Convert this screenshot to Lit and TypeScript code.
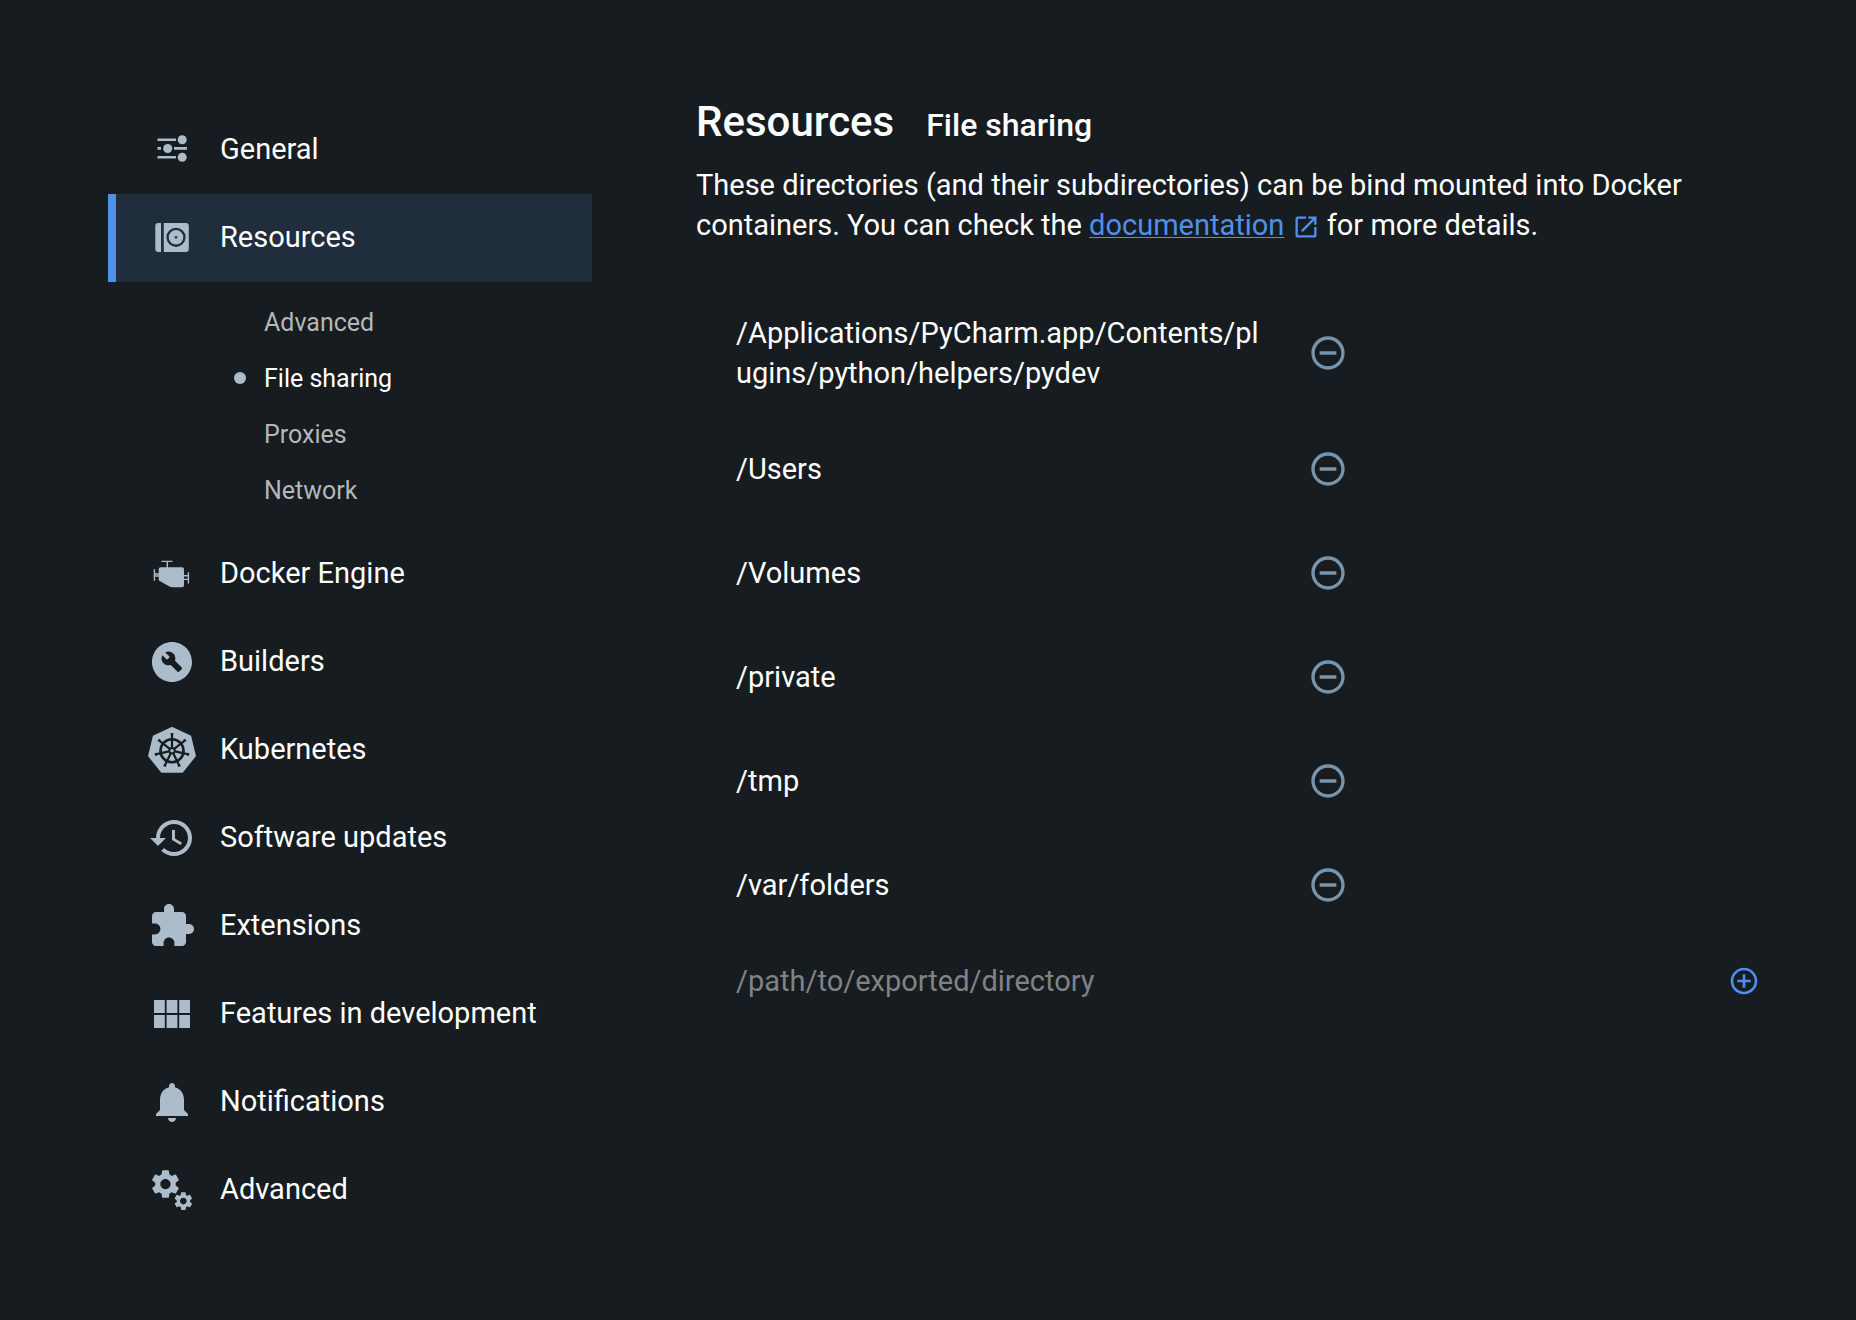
import { LitElement, html, css, svg, nothing } from "lit";
import type { TemplateResult, SVGTemplateResult } from "lit";
import { customElement, property, state } from "lit/decorators.js";
import { classMap } from "lit/directives/class-map.js";

const GEAR =
  "M19.14 12.94c.04-.3.06-.61.06-.94 0-.32-.02-.64-.07-.94l2.03-1.58c.18-.14.23-.41.12-.61l-1.92-3.32c-.12-.22-.37-.29-.59-.22l-2.39.96c-.5-.38-1.03-.7-1.62-.94l-.36-2.54c-.04-.24-.24-.41-.48-.41h-3.84c-.24 0-.43.17-.47.41l-.36 2.54c-.59.24-1.13.57-1.62.94l-2.39-.96c-.22-.08-.47 0-.59.22L2.74 8.87c-.12.21-.08.47.12.61l2.03 1.58c-.05.3-.09.63-.09.94s.02.64.07.94l-2.03 1.58c-.18.14-.23.41-.12.61l1.92 3.32c.12.22.37.29.59.22l2.39-.96c.5.38 1.03.7 1.62.94l.36 2.54c.05.24.24.41.48.41h3.84c.24 0 .44-.17.47-.41l.36-2.54c.59-.24 1.13-.56 1.62-.94l2.39.96c.22.08.47 0 .59-.22l1.92-3.32c.12-.22.07-.47-.12-.61l-2.01-1.58zM12 15.6c-1.98 0-3.6-1.62-3.6-3.6s1.62-3.6 3.6-3.6 3.6 1.62 3.6 3.6-1.62 3.6-3.6 3.6z";

const SPOKES = [0, 1, 2, 3, 4, 5, 6].map((n) => (n * 360) / 7);

// Every icon is drawn on a 48-unit grid; 24-unit glyphs are scaled up by two.
const icons: Record<string, SVGTemplateResult> = {
  general: svg`
    <path d="M9.5 12.5H28v2.6H9.5zM9.5 21.1H13v2.7H9.5zM26 21.1h13v2.7H26zM9.5 29.9H28v2.6H9.5z" />
    <circle cx="34.2" cy="13.8" r="4.5" /><circle cx="19.7" cy="22.5" r="4.5" /><circle cx="34.2" cy="31.2" r="4.5" />`,
  resources: svg`
    <path fill-rule="evenodd" d="M10.3 9H13v29h-2.7a3 3 0 0 1-3-3V12a3 3 0 0 1 3-3z
      M15.8 9h22a3 3 0 0 1 3 3v23a3 3 0 0 1-3 3h-22z
      M28 13.7a9.6 9.6 0 1 0 0 19.2a9.6 9.6 0 1 0 0-19.2z
      M28 16a7.3 7.3 0 1 1 0 14.6a7.3 7.3 0 1 1 0-14.6z
      M28 21.9a1.4 1.4 0 1 0 0 2.8a1.4 1.4 0 1 0 0-2.8z" />`,
  engine: svg`
    <path d="M12.7 17.3H34a2 2 0 0 1 2 2v16a2 2 0 0 1-2 2H25q-2 0-4-1l-9.3-5.2q-1-.6-1-1.6V19.3a2 2 0 0 1 2-2z" />
    <path fill="none" stroke="currentColor" stroke-width="1.4" d="M13.5 11.4H24.5M19.3 11.4V18M6.4 19.3V30.7M6.4 24H11M6.4 26H11M40.4 22.3V33.5M36 25.8H40.4M36 29.4H40.4" />`,
  builders: svg`
    <path transform="scale(2)" fill-rule="evenodd" d="M12 2C6.48 2 2 6.48 2 12s4.48 10 10 10 10-4.48 10-10S17.52 2 12 2zM16.9 15.49l-1.4 1.4c-.2.2-.51.2-.71 0l-3.41-3.41c-1.22.43-2.64.17-3.62-.81-1.11-1.11-1.3-2.79-.59-4.1l2.35 2.35 1.41-1.41-2.35-2.34c1.32-.71 2.99-.52 4.1.59.98.98 1.24 2.4.81 3.62l3.41 3.41c.19.19.19.51 0 .7z" />`,
  kubernetes: svg`
    <path stroke="currentColor" stroke-width="2" stroke-linejoin="round" d="M24 2L42.2 10.5L46.9 29.8L34.3 45.7H13.7L1.1 29.8L5.8 10.5z" />
    <g class="cut" fill="none" stroke-width="2.2">
      <circle cx="24" cy="24.7" r="11.5" stroke-width="2.6" />
      <circle cx="24" cy="24.7" r="2.7" stroke-width="1.9" />
      ${SPOKES.map((a) => svg`<path transform="rotate(${a} 24 24.7)" d="M24 21.5V8M22.7 8.2h2.6" />`)}
    </g>`,
  updates: svg`
    <path transform="scale(2)" d="M13 3c-4.97 0-9 4.03-9 9H1l3.89 3.89.07.14L9 12H6c0-3.87 3.13-7 7-7s7 3.13 7 7-3.13 7-7 7c-1.93 0-3.68-.79-4.94-2.06l-1.42 1.42C8.27 19.99 10.51 21 13 21c4.97 0 9-4.03 9-9s-4.03-9-9-9zm-1 5v5l4.28 2.54.72-1.21-3.5-2.08V8H12z" />`,
  extensions: svg`
    <path transform="scale(2)" d="M20.5 11H19V7c0-1.1-.9-2-2-2h-4V3.5C13 2.12 11.88 1 10.5 1S8 2.12 8 3.5V5H4c-1.1 0-1.99.9-1.99 2v3.8H3.5c1.49 0 2.7 1.21 2.7 2.7s-1.21 2.7-2.7 2.7H2V20c0 1.1.9 2 2 2h3.8v-1.5c0-1.49 1.21-2.7 2.7-2.7 1.49 0 2.7 1.21 2.7 2.7V22H17c1.1 0 2-.9 2-2v-4h1.5c1.38 0 2.5-1.12 2.5-2.5S21.88 11 20.5 11z" />`,
  features: svg`
    <path d="M6 10h10.8v13H6zM18.6 10h10.8v13H18.6zM31.2 10H42v13H31.2zM6 25h10.8v13H6zM18.6 25h10.8v13H18.6zM31.2 25H42v13H31.2z" />`,
  notifications: svg`
    <path transform="scale(2)" d="M12 22c1.1 0 2-.9 2-2h-4c0 1.1.89 2 2 2zm6-6v-5c0-3.07-1.64-5.64-4.5-6.32V4c0-.83-.67-1.5-1.5-1.5s-1.5.67-1.5 1.5v.68C7.63 5.36 6 7.92 6 11v5l-2 2v1h16v-1l-2-2z" />`,
  advanced: svg`
    <path transform="translate(0.3 0.9) scale(1.43)" d=${GEAR} />
    <path transform="translate(24.2 23.9) scale(.93)" d=${GEAR} />`,
  remove: svg`
    <path transform="scale(2)" d="M7 11v2h10v-2H7zm5-9C6.48 2 2 6.48 2 12s4.48 10 10 10 10-4.48 10-10S17.52 2 12 2zm0 18c-4.41 0-8-3.59-8-8s3.59-8 8-8 8 3.59 8 8-3.59 8-8 8z" />`,
  add: svg`
    <path transform="scale(2)" d="M13 7h-2v4H7v2h4v4h2v-4h4v-2h-4V7zm-1-5C6.48 2 2 6.48 2 12s4.48 10 10 10 10-4.48 10-10S17.52 2 12 2zm0 18c-4.41 0-8-3.59-8-8s3.59-8 8-8 8 3.59 8 8-3.59 8-8 8z" />`,
  external: svg`
    <path transform="scale(2)" d="M19 19H5V5h7V3H5c-1.11 0-2 .9-2 2v14c0 1.1.89 2 2 2h14c1.1 0 2-.9 2-2v-7h-2v7zM14 3v2h3.59l-9.83 9.83 1.41 1.41L19 6.41V10h2V3h-7z" />`,
};

@customElement("ui-icon")
export class UiIcon extends LitElement {
  static styles = css`
    :host { display: inline-flex; width: 48px; height: 48px; flex: none; }
    .glyph { width: 100%; height: 100%; fill: currentColor; }
    .cut { stroke: #171c20; }
  `;

  @property() name = "";

  render(): TemplateResult {
    return html`<svg class="glyph" viewBox="0 0 48 48" aria-hidden="true">${icons[this.name]}</svg>`;
  }
}

interface Section {
  id: string;
  label: string;
  pages?: string[];
}

const SECTIONS: Section[] = [
  { id: "general", label: "General" },
  { id: "resources", label: "Resources", pages: ["Advanced", "File sharing", "Proxies", "Network"] },
  { id: "engine", label: "Docker Engine" },
  { id: "builders", label: "Builders" },
  { id: "kubernetes", label: "Kubernetes" },
  { id: "updates", label: "Software updates" },
  { id: "extensions", label: "Extensions" },
  { id: "features", label: "Features in development" },
  { id: "notifications", label: "Notifications" },
  { id: "advanced", label: "Advanced" },
];

@customElement("settings-nav")
export class SettingsNav extends LitElement {
  static styles = css`
    :host { display: block; }
    .list { list-style: none; margin: 0; padding: 0; }
    .item {
      display: flex; align-items: center; gap: 24px; box-sizing: border-box;
      min-height: 88px; padding: 0 12px 0 32px; border-left: 8px solid transparent;
      color: #fff; text-decoration: none;
    }
    .item.current { background: #1f2d3d; border-left-color: #4f90ea; }
    .icon { color: #adbccb; }
    .label { padding-bottom: 2px; }
    .pages { list-style: none; margin: 0; padding: 12px 0 12px 126px; }
    .page {
      display: flex; align-items: center; gap: 18px; height: 56px;
      font-size: 25px; color: #b4b7b9; text-decoration: none;
    }
    .page::before { content: ""; width: 12px; height: 12px; border-radius: 50%; }
    .page.current { color: #fff; }
    .page.current::before { background: #adbccb; }
  `;

  @property() section = "";
  @property() page = "";

  render(): TemplateResult {
    return html`<nav aria-label="Settings">
      <ul class="list">
        ${SECTIONS.map((s) => {
          const current = s.id === this.section;
          return html`<li>
            <a class=${classMap({ item: true, current })} href="#${s.id}">
              <ui-icon class="icon" name=${s.id}></ui-icon><span class="label">${s.label}</span>
            </a>
            ${current && s.pages
              ? html`<ul class="pages">
                  ${s.pages.map(
                    (p) => html`<li>
                      <a class=${classMap({ page: true, current: p === this.page })} href="#${s.id}"
                        aria-current=${p === this.page ? "page" : nothing}>${p}</a>
                    </li>`
                  )}
                </ul>`
              : nothing}
          </li>`;
        })}
      </ul>
    </nav>`;
  }
}

@customElement("shared-folders")
export class SharedFolders extends LitElement {
  static styles = css`
    :host { display: block; }
    .list { list-style: none; margin: 0; padding: 0; max-width: 660px; }
    .row {
      display: flex; align-items: center; gap: 36px;
      padding: 24px 0 24px 40px;
    }
    .path { flex: 1; min-width: 0; line-height: 40px; word-break: break-all; }
    .button {
      display: flex; align-items: center; justify-content: center; flex: none;
      width: 56px; height: 56px; padding: 0; border: 0; border-radius: 50%;
      background: none; cursor: pointer;
    }
    .remove { color: #7794ab; }
    .remove ui-icon { width: 40px; height: 40px; }
    .add { color: #4f90ea; }
    .add ui-icon { width: 32px; height: 32px; }
    .entry { display: flex; align-items: center; gap: 36px; padding: 16px 0 16px 40px; }
    .field {
      flex: 1; min-width: 0; height: 56px; padding: 0; border: 0; outline: 0;
      background: none; color: #fff; font: inherit;
    }
    .field::placeholder { color: #808385; opacity: 1; }
  `;

  @state() private paths = [
    "/Applications/PyCharm.app/Contents/plugins/python/helpers/pydev",
    "/Users",
    "/Volumes",
    "/private",
    "/tmp",
    "/var/folders",
  ];

  private remove(path: string) {
    this.paths = this.paths.filter((p) => p !== path);
  }

  private add(e: Event) {
    e.preventDefault();
    const field = this.renderRoot.querySelector<HTMLInputElement>(".field")!;
    const value = field.value.trim();
    if (value && !this.paths.includes(value)) this.paths = [...this.paths, value];
    field.value = "";
  }

  render(): TemplateResult {
    return html`
      <ul class="list">
        ${this.paths.map(
          (p) => html`<li class="row">
            <span class="path">${p}</span>
            <button class="button remove" type="button" aria-label="Remove ${p}" @click=${() => this.remove(p)}>
              <ui-icon name="remove"></ui-icon>
            </button>
          </li>`
        )}
      </ul>
      <form class="entry" @submit=${this.add}>
        <input class="field" type="text" aria-label="Directory to export" placeholder="/path/to/exported/directory" />
        <button class="button add" type="submit" aria-label="Add directory"><ui-icon name="add"></ui-icon></button>
      </form>
    `;
  }
}

@customElement("app-root")
export class AppRoot extends LitElement {
  static styles = css`
    :host {
      display: grid; grid-template-columns: minmax(280px, 484px) minmax(0, 1fr); column-gap: 104px;
      box-sizing: border-box; min-height: 100vh; padding: 96px 84px 64px 108px;
      background: #171c20; color: #fff;
      font-family: Roboto, "Liberation Sans", sans-serif; font-size: 29px;
    }
    .nav { padding-top: 10px; }
    .heading { display: flex; align-items: baseline; gap: 32px; }
    .title { margin: 0; font-size: 42px; line-height: 52px; font-weight: 500; }
    .subtitle { margin: 0; font-size: 32px; line-height: 52px; font-weight: 500; }
    .intro { margin: 14px 0 44px; line-height: 40px; }
    .link { color: #4f90ea; text-decoration: underline; text-underline-offset: 2px; text-decoration-thickness: 1px; }
    .external { width: 28px; height: 28px; vertical-align: -6px; color: #4f90ea; }
  `;

  render(): TemplateResult {
    return html`
      <settings-nav class="nav" section="resources" page="File sharing"></settings-nav>
      <main>
        <header class="heading">
          <h1 class="title">Resources</h1>
          <h2 class="subtitle">File sharing</h2>
        </header>
        <p class="intro">
          These directories (and their subdirectories) can be bind mounted into Docker containers. You can check the
          <a class="link" href="#documentation">documentation</a>
          <ui-icon class="external" name="external"></ui-icon> for more details.
        </p>
        <shared-folders></shared-folders>
      </main>
    `;
  }
}
